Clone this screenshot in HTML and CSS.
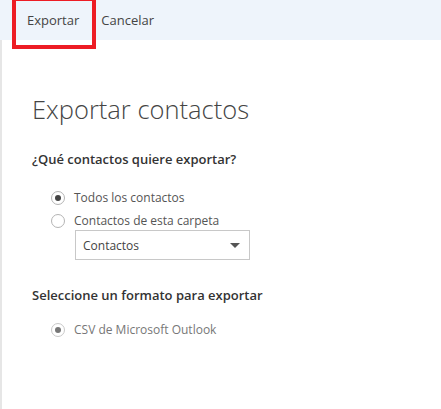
FILE: index.html
```html
<!DOCTYPE html>
<html lang="es">
<head>
    <meta charset="UTF-8">
    <meta name="viewport" content="width=device-width, initial-scale=1.0">
    <title>Exportar contactos</title>
    <link rel="stylesheet" href="styles.css">
</head>
<body>
    <div class="toolbar">
        <button class="tool-btn active">Exportar</button>
        <button class="tool-btn">Cancelar</button>
    </div>
    <div class="panel">
        <h1>Exportar contactos</h1>

        <p class="question">¿Qué contactos quiere exportar?</p>
        <div class="options first">
            <label class="option">
                <span class="radio checked"></span>
                Todos los contactos
            </label>
            <label class="option">
                <span class="radio"></span>
                Contactos de esta carpeta
            </label>
            <div class="select">
                <span>Contactos</span>
                <span class="caret"></span>
            </div>
        </div>

        <p class="question format">Seleccione un formato para exportar</p>
        <div class="options">
            <label class="option disabled">
                <span class="radio checked"></span>
                CSV de Microsoft Outlook
            </label>
        </div>
    </div>
</body>
</html>
```

FILE: styles.css
```css
body {
    margin: 0;
    font-family: "Open Sans", "Noto Sans", sans-serif;
    background: #ffffff;
    color: #333333;
}

.toolbar {
    height: 40px;
    background: #eef4fb;
    display: flex;
    align-items: center;
    padding-left: 16px;
}

.tool-btn {
    font-family: inherit;
    font-size: 13px;
    color: #444444;
    background: none;
    border: none;
    padding: 0 11px;
    height: 40px;
    cursor: pointer;
}

.tool-btn.active {
    position: relative;
}

.tool-btn.active::after {
    content: "";
    position: absolute;
    left: -4px;
    right: -6px;
    top: -3px;
    bottom: -9px;
    border: 4px solid #ed1c24;
}

.panel {
    border-left: 2px solid #e6e6e6;
    min-height: 369px;
    padding: 49px 0 0 30px;
    box-sizing: border-box;
}

h1 {
    font-size: 25.5px;
    font-weight: 300;
    color: #444444;
    margin: 0 0 21px;
    line-height: 40px;
}

.question {
    font-size: 13px;
    font-weight: 600;
    color: #333333;
    margin: 0 0 18px;
}

.question.format {
    margin-bottom: 14px;
}

.options {
    padding-left: 19px;
    margin-bottom: 24px;
}

.options.first {
    margin-bottom: 26px;
}

.option {
    display: flex;
    align-items: center;
    gap: 9px;
    font-size: 12px;
    color: #555555;
    height: 23px;
}

.radio {
    width: 14px;
    height: 14px;
    border: 1px solid #b4b4b4;
    border-radius: 50%;
    box-sizing: border-box;
    display: flex;
    align-items: center;
    justify-content: center;
}

.radio.checked::before {
    content: "";
    width: 6px;
    height: 6px;
    border-radius: 50%;
    background: #444444;
}

.option.disabled {
    color: #777777;
}

.option.disabled .radio {
    border-color: #c8c8c8;
}

.option.disabled .radio.checked::before {
    background: #777777;
}

.select {
    margin: -2px 0 0 24px;
    width: 175px;
    height: 30px;
    border: 1px solid #c8c8c8;
    box-sizing: border-box;
    display: flex;
    align-items: center;
    justify-content: space-between;
    padding: 0 9px 0 7px;
    font-size: 12px;
    color: #444444;
}

.caret {
    width: 0;
    height: 0;
    border-left: 5px solid transparent;
    border-right: 5px solid transparent;
    border-top: 5px solid #555555;
}
```
